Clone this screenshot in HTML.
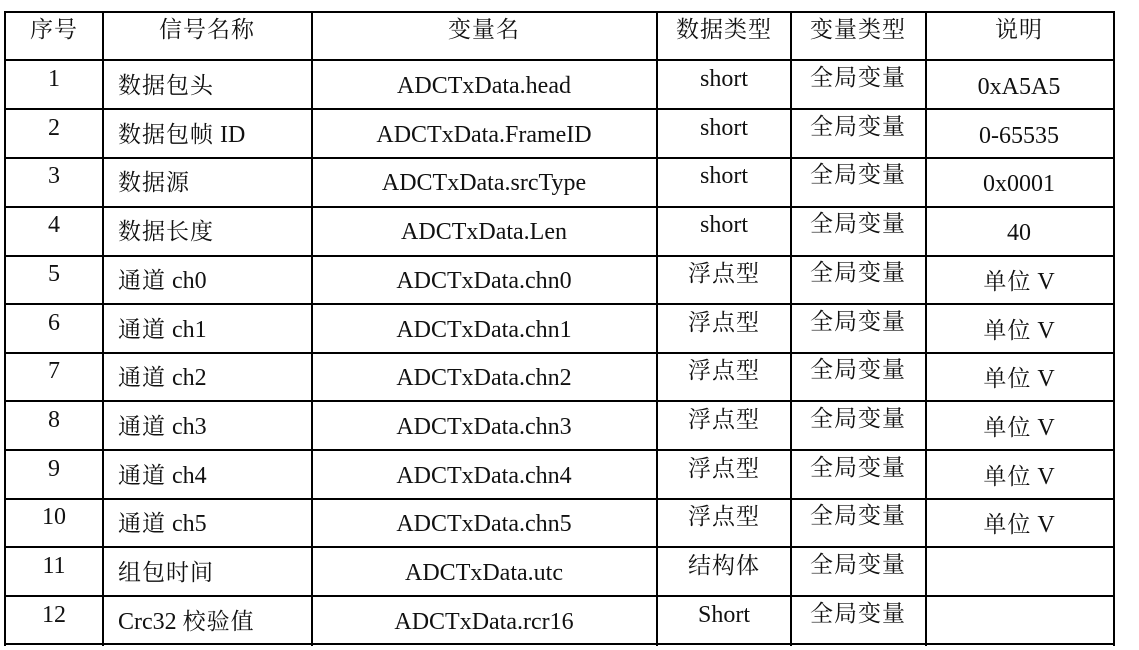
<!DOCTYPE html>
<html><head><meta charset="utf-8"><style>
body{margin:0;width:1139px;height:650px;background:#fff;position:relative;overflow:hidden;font-family:"Liberation Serif","Noto Serif CJK SC","Noto Sans CJK SC",serif;font-size:24px;color:#111}
.h{position:absolute;background:#000;height:2px;left:4px;width:1111px}
.v{position:absolute;background:#000;width:2px;top:11px;height:635px}
.t{position:absolute;white-space:nowrap;line-height:24px;transform:translate(-50%,-50%)}
.l{position:absolute;white-space:nowrap;line-height:24px;transform:translateY(-50%)}
.c{letter-spacing:1px;font-size:23px}
</style></head><body>
<div class="h" style="top:11px"></div>
<div class="h" style="top:59px"></div>
<div class="h" style="top:108px"></div>
<div class="h" style="top:157px"></div>
<div class="h" style="top:206px"></div>
<div class="h" style="top:255px"></div>
<div class="h" style="top:303px"></div>
<div class="h" style="top:352px"></div>
<div class="h" style="top:400px"></div>
<div class="h" style="top:449px"></div>
<div class="h" style="top:498px"></div>
<div class="h" style="top:546px"></div>
<div class="h" style="top:595px"></div>
<div class="h" style="top:643px"></div>
<div class="v" style="left:4px"></div>
<div class="v" style="left:102px"></div>
<div class="v" style="left:311px"></div>
<div class="v" style="left:656px"></div>
<div class="v" style="left:790px"></div>
<div class="v" style="left:925px"></div>
<div class="v" style="left:1113px"></div>

<div class="t c" style="left:54px;top:30px">序号</div>
<div class="t c" style="left:207px;top:30px">信号名称</div>
<div class="t c" style="left:484px;top:30px">变量名</div>
<div class="t c" style="left:724px;top:30px">数据类型</div>
<div class="t c" style="left:858px;top:30px">变量类型</div>
<div class="t c" style="left:1019px;top:30px">说明</div>

<div id="rows"></div>
<script>
function w(s){return s.replace(/([\u4e00-\u9fff]+)/g,'<span class="c">$1</span>');}
var d=[["1","数据包头","ADCTxData.head","short","0xA5A5"],["2","数据包帧 ID","ADCTxData.FrameID","short","0-65535"],["3","数据源","ADCTxData.srcType","short","0x0001"],["4","数据长度","ADCTxData.Len","short","40"],["5","通道 ch0","ADCTxData.chn0","浮点型","单位 V"],["6","通道 ch1","ADCTxData.chn1","浮点型","单位 V"],["7","通道 ch2","ADCTxData.chn2","浮点型","单位 V"],["8","通道 ch3","ADCTxData.chn3","浮点型","单位 V"],["9","通道 ch4","ADCTxData.chn4","浮点型","单位 V"],["10","通道 ch5","ADCTxData.chn5","浮点型","单位 V"],["11","组包时间","ADCTxData.utc","结构体",""],["12","Crc32 校验值","ADCTxData.rcr16","Short",""]];
var h="";
d.forEach(function(r,i){var t=60+48.7*i;
h+='<div class="t" style="left:54px;top:'+(t+19)+'px">'+r[0]+'</div>';
h+='<div class="l" style="left:118px;top:'+(t+26)+'px">'+w(r[1])+'</div>';
h+='<div class="t" style="left:484px;top:'+(t+26)+'px">'+r[2]+'</div>';
h+='<div class="t" style="left:724px;top:'+(t+19)+'px">'+w(r[3])+'</div>';
h+='<div class="t c" style="left:858px;top:'+(t+18)+'px">全局变量</div>';
h+='<div class="t" style="left:1019px;top:'+(t+27)+'px">'+w(r[4])+'</div>';});
document.getElementById("rows").innerHTML=h;
</script>
</body></html>
